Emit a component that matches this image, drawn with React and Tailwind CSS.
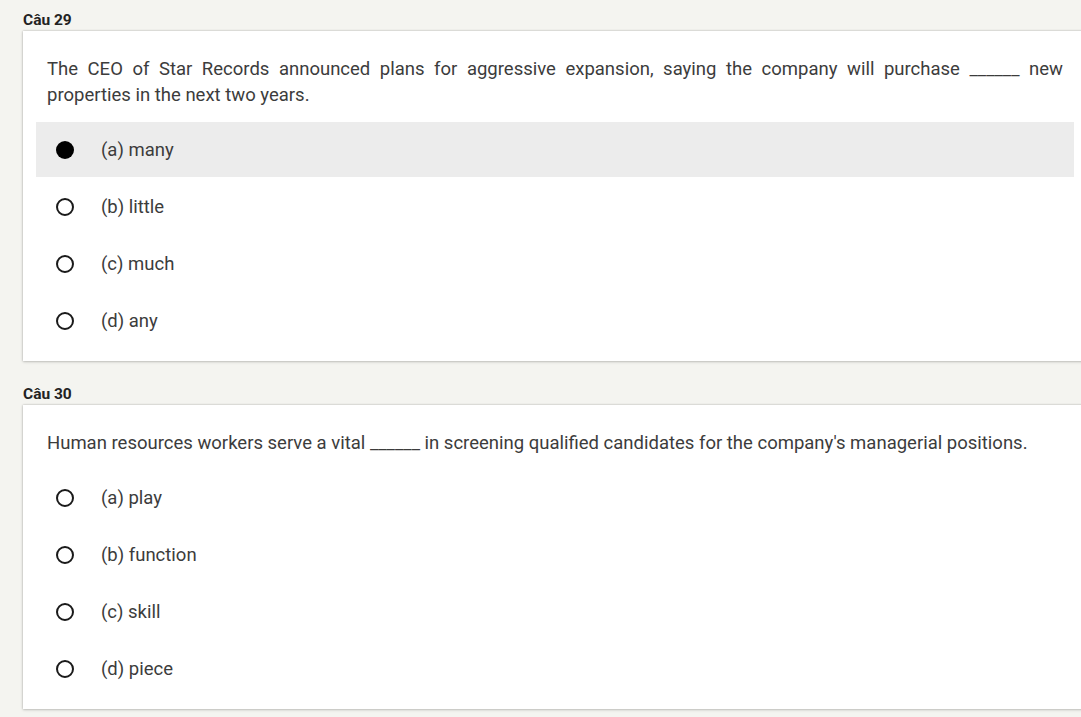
import React from 'react';

const questions = [
  {
    label: 'Câu 29',
    text: 'The CEO of Star Records announced plans for aggressive expansion, saying the company will purchase ______ new properties in the next two years.',
    options: ['(a) many', '(b) little', '(c) much', '(d) any'],
    selected: 0,
  },
  {
    label: 'Câu 30',
    text: "Human resources workers serve a vital ______ in screening qualified candidates for the company's managerial positions.",
    options: ['(a) play', '(b) function', '(c) skill', '(d) piece'],
    selected: -1,
  },
];

function Radio({ checked }) {
  if (checked) {
    return <span className="w-[18px] h-[18px] rounded-full bg-black shrink-0" />;
  }
  return <span className="w-[18px] h-[18px] rounded-full border-2 border-[#1a1a1a] shrink-0" />;
}

function Question({ q, first }) {
  return (
    <div className={first ? 'pt-[11px]' : 'pt-[24px]'}>
      {/* Label */}
      <div className="text-[15.5px] leading-[18px] font-bold text-[#222] mb-[2px] pt-[1px] -mt-[1px]">{q.label}</div>

      {/* Card */}
      <div className="w-[1064px] bg-white shadow-[0_0_2px_rgba(0,0,0,0.25),0_1px_3px_rgba(0,0,0,0.15)] pt-[25px] pb-[13px]">
        <p className="px-[24px] text-[18.5px] leading-[26px] text-[#3c3c3c] text-justify">{q.text}</p>
        <div className="mt-[14px] px-[13px] flex flex-col gap-[2px]">
          {q.options.map((opt, i) => (
            <div
              key={opt}
              className={`h-[55px] flex items-center pl-[20px] gap-[27px] ${
                i === q.selected ? 'bg-[#ececec]' : ''
              }`}
            >
              <Radio checked={i === q.selected} />
              <span className="text-[18.5px] text-[#3c3c3c] mt-[2px]">{opt}</span>
            </div>
          ))}
        </div>
      </div>
    </div>
  );
}

export default function App() {
  return (
    <div
      className="w-[1081px] h-[717px] overflow-hidden bg-[#f4f4f0] pl-[23px]"
      style={{ fontFamily: 'Roboto, "Noto Sans", sans-serif' }}
    >
      {questions.map((q, i) => (
        <Question key={q.label} q={q} first={i === 0} />
      ))}
    </div>
  );
}
